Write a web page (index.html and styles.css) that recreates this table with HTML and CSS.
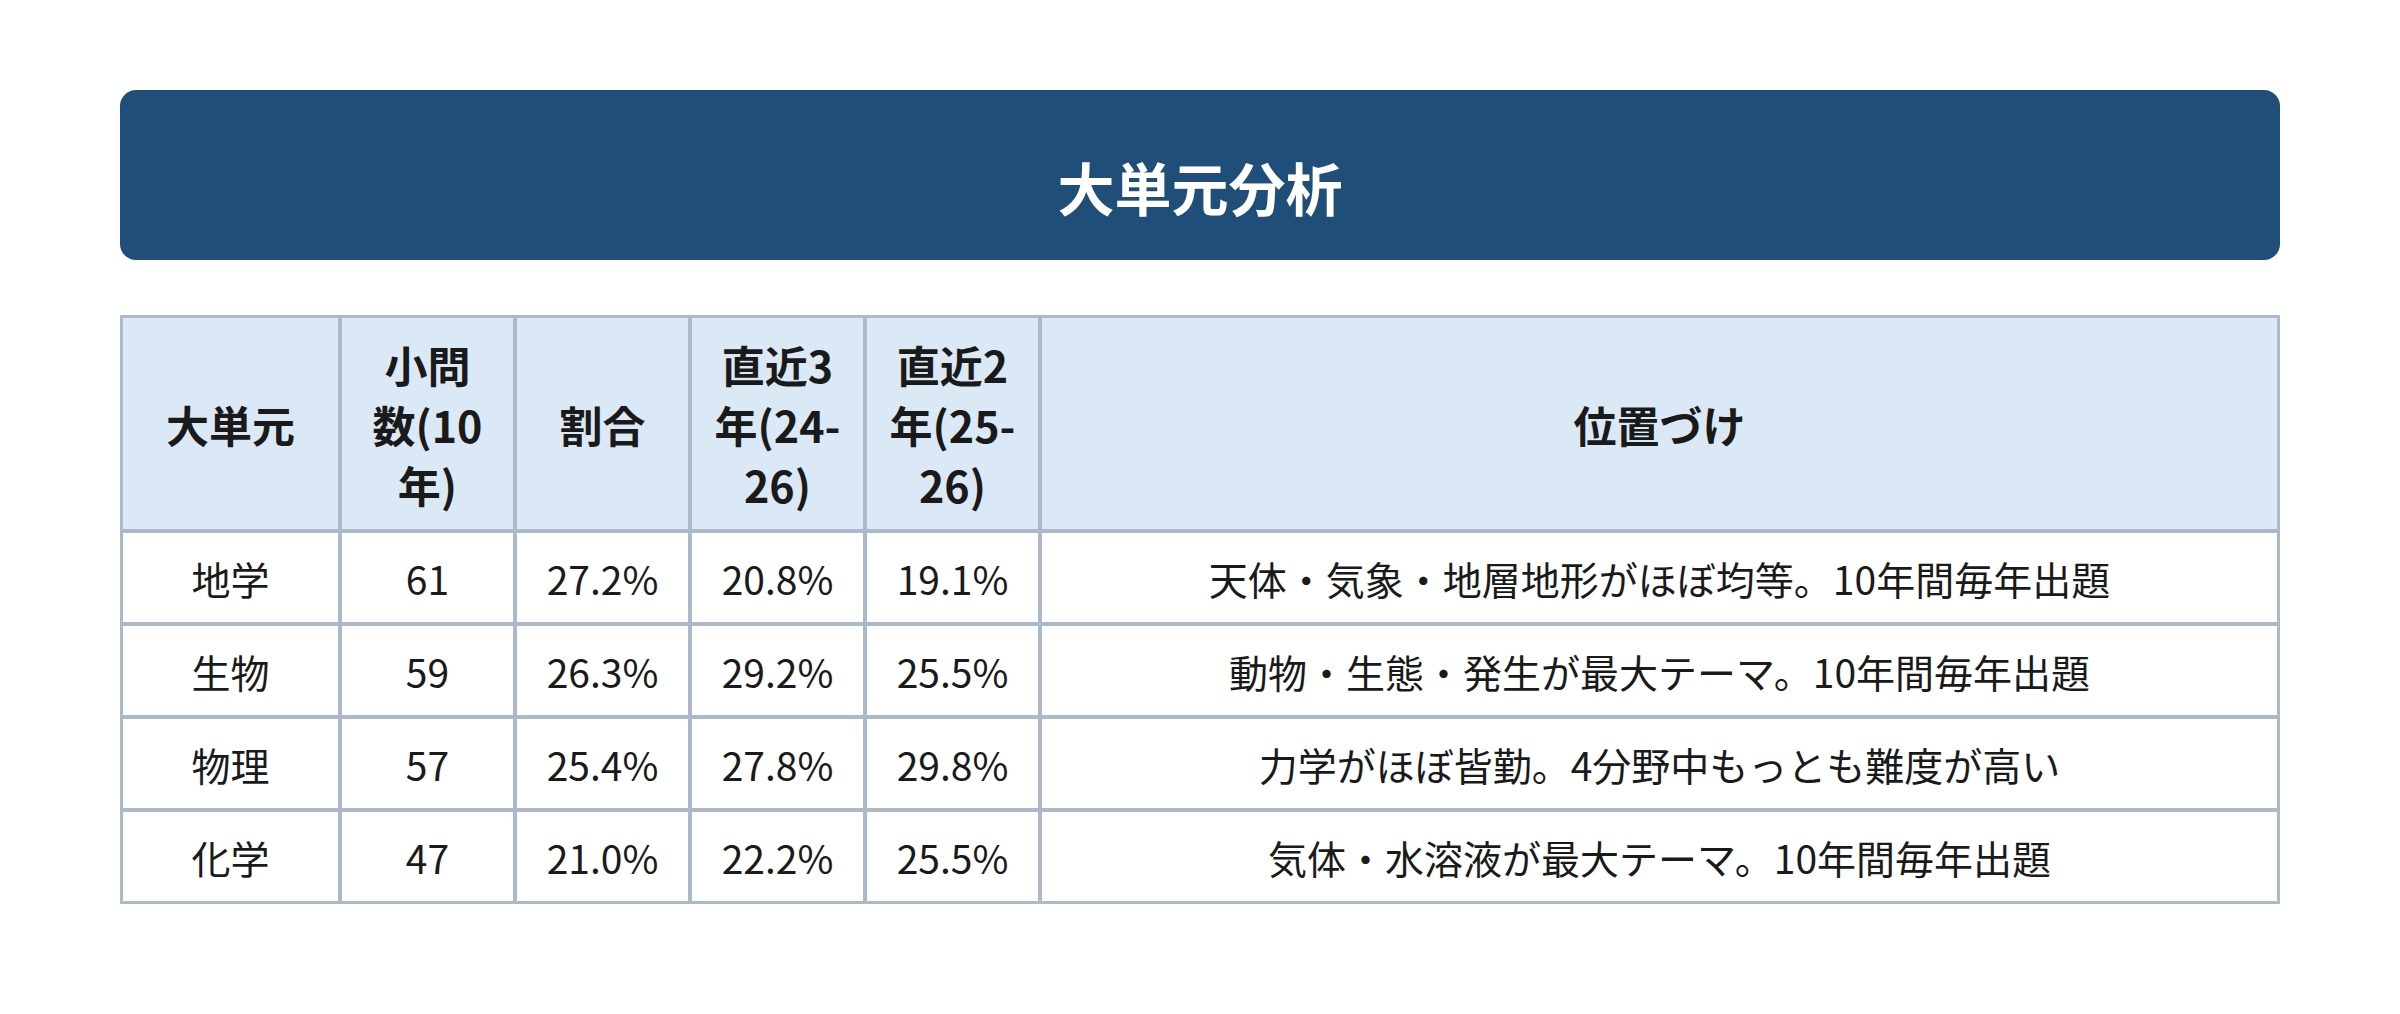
FILE: index.html
```html
<!DOCTYPE html>
<html lang="ja">
<head>
<meta charset="utf-8">
<title>大単元分析</title>
<link rel="stylesheet" href="styles.css">
</head>
<body>
<main class="page">
  <header class="title-bar"><h1 class="title">大単元分析</h1></header>
  <section class="table" role="table">
    <div class="cell head" role="columnheader">大単元</div>
    <div class="cell head" role="columnheader">小問<br>数(10<br>年)</div>
    <div class="cell head" role="columnheader">割合</div>
    <div class="cell head" role="columnheader">直近3<br>年(24-<br>26)</div>
    <div class="cell head" role="columnheader">直近2<br>年(25-<br>26)</div>
    <div class="cell head" role="columnheader">位置づけ</div>

    <div class="cell">地学</div>
    <div class="cell">61</div>
    <div class="cell">27.2%</div>
    <div class="cell">20.8%</div>
    <div class="cell">19.1%</div>
    <div class="cell">天体・気象・地層地形がほぼ均等。10年間毎年出題</div>

    <div class="cell">生物</div>
    <div class="cell">59</div>
    <div class="cell">26.3%</div>
    <div class="cell">29.2%</div>
    <div class="cell">25.5%</div>
    <div class="cell">動物・生態・発生が最大テーマ。10年間毎年出題</div>

    <div class="cell">物理</div>
    <div class="cell">57</div>
    <div class="cell">25.4%</div>
    <div class="cell">27.8%</div>
    <div class="cell">29.8%</div>
    <div class="cell">力学がほぼ皆勤。4分野中もっとも難度が高い</div>

    <div class="cell">化学</div>
    <div class="cell">47</div>
    <div class="cell">21.0%</div>
    <div class="cell">22.2%</div>
    <div class="cell">25.5%</div>
    <div class="cell">気体・水溶液が最大テーマ。10年間毎年出題</div>
  </section>
</main>
</body>
</html>
```

FILE: styles.css
```css
html, body {
  margin: 0;
  padding: 0;
  background: #ffffff;
}

body {
  font-family: "Noto Sans CJK JP", "Noto Sans", sans-serif;
  color: #1a1a1a;
}

.page {
  padding: 90px 120px 0 120px;
}

.title-bar {
  background: #1f4e79;
  border-radius: 16px;
  height: 170px;
  box-sizing: border-box;
  padding-top: 56px;
}

.title {
  margin: 0;
  color: #ffffff;
  font-size: 57px;
  line-height: 80px;
  font-weight: 700;
  text-align: center;
}

.table {
  margin-top: 55px;
  display: grid;
  grid-template-columns: 215px 171px 171px 171px 171px 1fr;
  grid-auto-rows: 89px;
  grid-template-rows: 211px;
  gap: 4px;
  background: #acb9ca;
  border: 3px solid #acb9ca;
}

.cell {
  background: #ffffff;
  display: flex;
  align-items: center;
  justify-content: center;
  text-align: center;
  font-size: 39px;
  line-height: 60px;
  padding: 0 8px;
  color: #1a1a1a;
  white-space: nowrap;
}

.head {
  background: #dbe9f6;
  font-weight: 700;
  font-size: 43px;
  line-height: 60px;
}
```
